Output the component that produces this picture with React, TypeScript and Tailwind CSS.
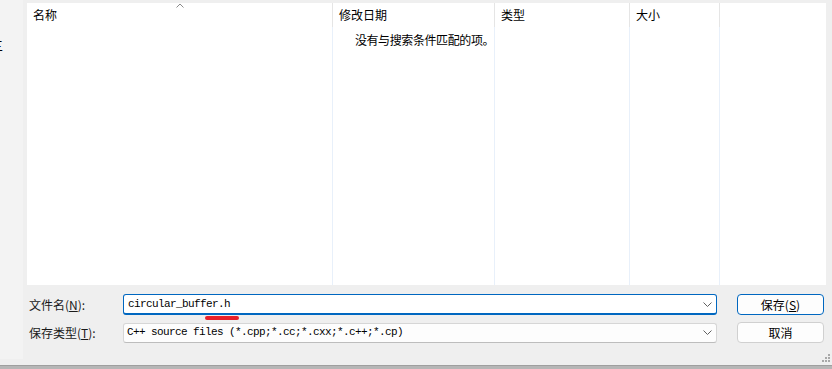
import { FC, ReactNode } from "react"

const ui = "font-['Noto_Sans_CJK_SC','Noto_Sans',sans-serif]"
const mono = "font-['Liberation_Mono','Noto_Sans_CJK_SC',monospace]"

const Chevron: FC = () => (
  <svg width="9" height="5" viewBox="0 0 9 5" className="shrink-0 block">
    <path d="M0.5 0.5 L4.5 4.5 L8.5 0.5" fill="none" stroke="#606060" strokeWidth="1" />
  </svg>
)

interface ColumnProps {
  title?: string
  width: string
  first?: boolean
}

const Column: FC<ColumnProps> = ({ title, width, first }) => (
  <div className={`${width} flex flex-col h-full`}>
    <div
      className={`h-[24px] flex items-center pl-[6px] text-[12px] text-black ${
        first ? "" : "border-l border-[#e5e5e5]"
      }`}
    >
      {title}
    </div>
    <div className={`flex-1 ${first ? "" : "border-l border-[#e8f0fa]"}`} />
  </div>
)

const Label: FC<{ children: ReactNode }> = ({ children }) => (
  <div className={`w-[96px] pl-[2px] text-[12px] text-[#1a1a1a] ${ui}`}>{children}</div>
)

export default function App() {
  return (
    <div className={`w-[832px] h-[369px] bg-[#efefef] flex flex-col overflow-hidden ${ui}`}>
      <div className="flex flex-1">
        {/* left nav strip */}
        <div className="w-[23px] h-[359px] bg-[#f3f3f3] overflow-hidden">
          <div className="mt-[38px] -ml-[9px] text-[12px] leading-[16px] text-black" aria-hidden>
            三
          </div>
        </div>

        <div className="flex-1 pl-[4px] pt-[3px] flex flex-col">
          {/* file list */}
          <div className="relative w-[799px] h-[282px] bg-white flex">
            <Column title="名称" width="w-[305px]" first />
            <Column title="修改日期" width="w-[162px]" />
            <Column title="类型" width="w-[135px]" />
            <Column title="大小" width="w-[90px]" />
            <Column width="flex-1" />

            <svg
              width="8"
              height="5"
              viewBox="0 0 8 5"
              className="absolute left-[149px] top-[0px]"
            >
              <path d="M0.5 4.5 L4 1 L7.5 4.5" fill="none" stroke="#8a8a8a" strokeWidth="1" />
            </svg>

            <div className="absolute left-0 right-[4px] top-[27px] text-center text-[12px] leading-[20px] text-black tracking-[-0.4px]">
              没有与搜索条件匹配的项。
            </div>
          </div>

          {/* form */}
          <div className="mt-[9px] flex items-center">
            <Label>
              文件名(<span className="underline">N</span>):
            </Label>
            <div className="relative w-[594px] h-[21px] bg-white border border-[#0067c0] border-b-2 rounded-[3px] flex items-center pl-[4px] pr-[4px]">
              <span className={`flex-1 text-[11px] tracking-[-0.6px] text-black ${mono}`}>
                circular_buffer.h
              </span>
              <Chevron />
              <div className="absolute left-[81px] top-[21px] w-[34px] h-[4px] rounded-full bg-[#e8202a]" />
            </div>
            <button className="ml-[20px] w-[87px] h-[21px] bg-[#fdfdfd] border border-[#0067c0] rounded-[4px] text-[12px] text-black leading-none">
              保存(<span className="underline">S</span>)
            </button>
          </div>

          <div className="mt-[7px] flex items-center">
            <Label>
              保存类型(<span className="underline">T</span>):
            </Label>
            <div className="w-[594px] h-[20px] bg-[#fdfdfd] border border-[#d6d6d6] border-b-[#bdbdbd] rounded-[3px] flex items-center pl-[3px] pr-[4px]">
              <span className={`flex-1 text-[11px] tracking-[-0.6px] text-black ${mono}`}>
                C++ source files (*.cpp;*.cc;*.cxx;*.c++;*.cp)
              </span>
              <Chevron />
            </div>
            <button className="ml-[20px] w-[87px] h-[21px] bg-[#fdfdfd] border border-[#d0d0d0] rounded-[4px] text-[12px] text-black leading-none">
              取消
            </button>
          </div>

          <div className="flex-1 flex justify-end items-end pr-[2px] pb-[3px]">
            <svg width="8" height="8" viewBox="0 0 8 8" className="block">
              <rect x="6" y="0" width="2" height="2" fill="#a8a8a8" />
              <rect x="3" y="3" width="2" height="2" fill="#a8a8a8" />
              <rect x="6" y="3" width="2" height="2" fill="#a8a8a8" />
              <rect x="0" y="6" width="2" height="2" fill="#a8a8a8" />
              <rect x="3" y="6" width="2" height="2" fill="#a8a8a8" />
              <rect x="6" y="6" width="2" height="2" fill="#a8a8a8" />
            </svg>
          </div>
        </div>
      </div>
      <div className="h-[1px] bg-[#9f9f9f]" />
      <div className="h-[3px] bg-[#b6b6b6]" />
    </div>
  )
}
